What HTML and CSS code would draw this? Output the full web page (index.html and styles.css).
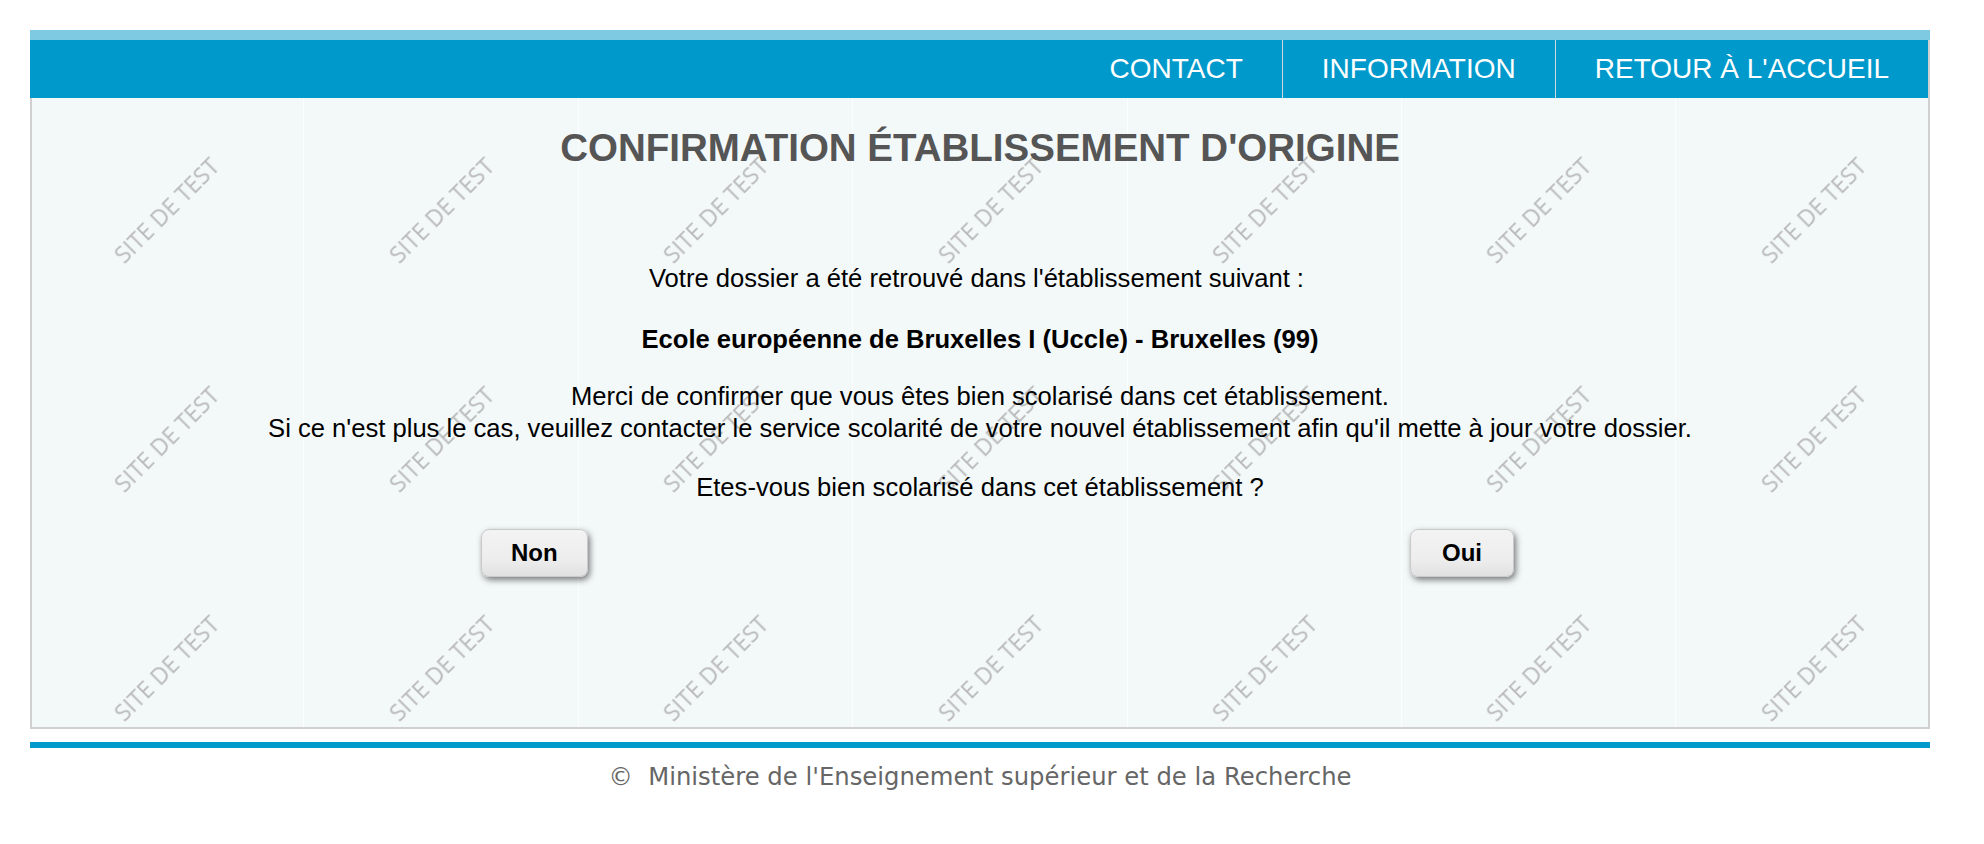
FILE: index.html
```html
<!DOCTYPE html>
<html lang="fr">
<head>
<meta charset="utf-8">
<title>Confirmation établissement d'origine</title>
<link rel="stylesheet" href="styles.css">
</head>
<body>
<div class="page">
  <div class="topbar"></div>
  <div class="frame">
    <nav class="nav">
      <a class="nav-item" href="#">CONTACT</a>
      <a class="nav-item sep" href="#">INFORMATION</a>
      <a class="nav-item sep" href="#">RETOUR À L'ACCUEIL</a>
    </nav>
    <main class="content">
      <div class="watermarks" aria-hidden="true">
        <span class="wm"><span class="wm-text">SITE DE TEST</span></span>
        <span class="wm"><span class="wm-text">SITE DE TEST</span></span>
        <span class="wm"><span class="wm-text">SITE DE TEST</span></span>
        <span class="wm"><span class="wm-text">SITE DE TEST</span></span>
        <span class="wm"><span class="wm-text">SITE DE TEST</span></span>
        <span class="wm"><span class="wm-text">SITE DE TEST</span></span>
        <span class="wm"><span class="wm-text">SITE DE TEST</span></span>
        <span class="wm"><span class="wm-text">SITE DE TEST</span></span>
        <span class="wm"><span class="wm-text">SITE DE TEST</span></span>
        <span class="wm"><span class="wm-text">SITE DE TEST</span></span>
        <span class="wm"><span class="wm-text">SITE DE TEST</span></span>
        <span class="wm"><span class="wm-text">SITE DE TEST</span></span>
        <span class="wm"><span class="wm-text">SITE DE TEST</span></span>
        <span class="wm"><span class="wm-text">SITE DE TEST</span></span>
        <span class="wm"><span class="wm-text">SITE DE TEST</span></span>
        <span class="wm"><span class="wm-text">SITE DE TEST</span></span>
        <span class="wm"><span class="wm-text">SITE DE TEST</span></span>
        <span class="wm"><span class="wm-text">SITE DE TEST</span></span>
        <span class="wm"><span class="wm-text">SITE DE TEST</span></span>
        <span class="wm"><span class="wm-text">SITE DE TEST</span></span>
        <span class="wm"><span class="wm-text">SITE DE TEST</span></span>
      </div>
      <h1 class="title">CONFIRMATION ÉTABLISSEMENT D'ORIGINE</h1>
      <p class="msg msg-first">Votre dossier a été retrouvé dans l'établissement suivant :&nbsp;</p>
      <p class="msg school">Ecole européenne de Bruxelles I (Uccle) - Bruxelles (99)</p>
      <p class="msg">Merci de confirmer que vous êtes bien scolarisé dans cet établissement.<br>Si ce n'est plus le cas, veuillez contacter le service scolarité de votre nouvel établissement afin qu'il mette à jour votre dossier.</p>
      <p class="msg msg-question">Etes-vous bien scolarisé dans cet établissement ?</p>
      <div class="actions">
        <button class="btn" type="button">Non</button>
        <button class="btn btn-oui" type="button">Oui</button>
      </div>
    </main>
  </div>
  <div class="footer-line"></div>
  <footer class="footer">©&nbsp; Ministère de l'Enseignement supérieur et de la Recherche</footer>
</div>
</body>
</html>
```

FILE: styles.css
```css
html, body {
  margin: 0;
  padding: 0;
  background: #ffffff;
}

body {
  font-family: "Liberation Sans", Arial, Helvetica, sans-serif;
  color: #000;
}

.page {
  width: 1900px;
  margin: 30px 0 0 30px;
}

.topbar {
  height: 10px;
  background: #7fcae3;
}

.frame {
  border: 2px solid #d0d0d0;
  border-top: 0;
}

.nav {
  display: flex;
  justify-content: flex-end;
  height: 58px;
  margin-left: -2px;
  background: #0099cb;
}

.nav-item {
  display: block;
  padding: 0 39px;
  line-height: 58px;
  font-size: 28px;
  color: #ffffff;
  text-decoration: none;
  white-space: nowrap;
}

.nav-item.sep {
  border-left: 1px solid #cfd9dd;
}

.content {
  position: relative;
  height: 629px;
  box-sizing: border-box;
  padding-top: 28px;
  background: #f3f8f9;
  overflow: hidden;
  text-align: center;
}

.watermarks {
  position: absolute;
  top: 0;
  left: -2px;
  display: grid;
  grid-template-columns: repeat(7, 274.4px);
  grid-auto-rows: 229px;
  z-index: 0;
}

.wm {
  display: flex;
  align-items: center;
  justify-content: center;
  border-right: 1px solid rgba(255, 255, 255, 0.75);
  overflow: hidden;
}

.wm-text {
  display: block;
  margin-top: -6px;
  transform: rotate(-45deg);
  font-family: "Open Sans", "Noto Sans", sans-serif;
  font-size: 23px;
  color: #bababa;
  white-space: nowrap;
  filter: blur(0.35px);
}

.title,
.msg,
.actions {
  position: relative;
  z-index: 1;
}

.title {
  margin: 0;
  font-size: 38.5px;
  line-height: 44px;
  font-weight: bold;
  color: #555555;
}

.msg {
  margin: 25px 0 0;
  font-size: 25.6px;
  line-height: 32px;
}

.msg-first {
  margin-top: 92px;
}

.school {
  margin-top: 29px;
  font-weight: bold;
}

.msg-question {
  margin-top: 27px;
}

.actions {
  display: flex;
  justify-content: space-between;
  margin-top: 26px;
  padding: 0 414px 0 449px;
}

.btn {
  height: 48px;
  padding: 0 29px;
  border: 1px solid #c9c9c9;
  border-radius: 8px;
  background: linear-gradient(#f3f3f3, #ededed 65%, #e1e1e1);
  box-shadow: 2px 3px 6px rgba(0, 0, 0, 0.5);
  font-family: "Liberation Sans", Arial, sans-serif;
  font-size: 24px;
  font-weight: bold;
  color: #000;
  cursor: pointer;
}

.btn-oui {
  padding: 0 31px;
}

.footer-line {
  height: 6px;
  margin-top: 13px;
  background: #0099cb;
}

.footer {
  margin-top: 14px;
  line-height: 30px;
  font-family: "DejaVu Sans", Verdana, sans-serif;
  font-size: 24.3px;
  color: #666666;
  text-align: center;
}
```
